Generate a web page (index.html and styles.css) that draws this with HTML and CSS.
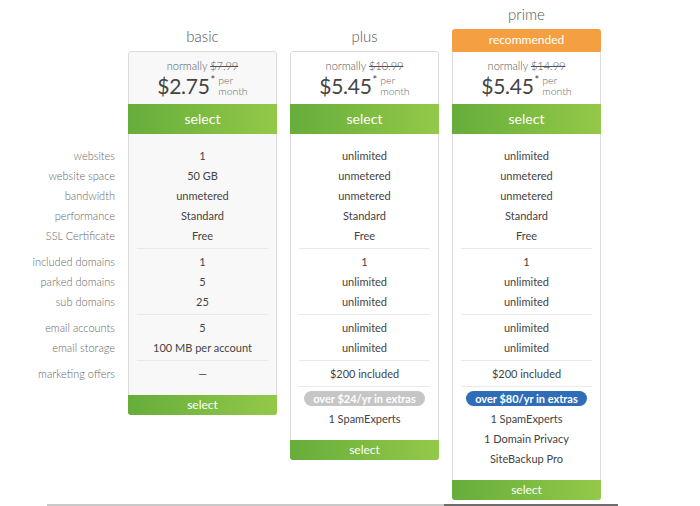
FILE: index.html
```html
<!DOCTYPE html>
<html>
<head>
<meta charset="utf-8">
<title>Plans</title>
<link rel="stylesheet" href="styles.css">
</head>
<body>
<div class="pricing">
  <div class="labels">
    <div class="row">websites</div>
    <div class="row">website space</div>
    <div class="row">bandwidth</div>
    <div class="row">performance</div>
    <div class="row">SSL Certificate</div>
    <div class="sep"></div>
    <div class="row">included domains</div>
    <div class="row">parked domains</div>
    <div class="row">sub domains</div>
    <div class="sep"></div>
    <div class="row">email accounts</div>
    <div class="row">email storage</div>
    <div class="sep"></div>
    <div class="row">marketing offers</div>
  </div>

  <div class="plan">
    <div class="plan-head"><div class="plan-name">basic</div></div>
    <div class="card card-basic">
      <div class="price-box">
        <div class="normally">normally <s>$7.99</s></div>
        <div class="price"><span class="amount">$2.75</span><span class="star">*</span><span class="per">per<br>month</span></div>
      </div>
      <a class="btn">select</a>
      <div class="features">
        <div class="row">1</div>
        <div class="row">50 GB</div>
        <div class="row">unmetered</div>
        <div class="row">Standard</div>
        <div class="row">Free</div>
        <div class="sep"></div>
        <div class="row">1</div>
        <div class="row">5</div>
        <div class="row">25</div>
        <div class="sep"></div>
        <div class="row">5</div>
        <div class="row">100 MB per account</div>
        <div class="sep"></div>
        <div class="row">&mdash;</div>
      </div>
      <a class="btn btn-small">select</a>
    </div>
  </div>

  <div class="plan">
    <div class="plan-head"><div class="plan-name">plus</div></div>
    <div class="card">
      <div class="price-box">
        <div class="normally">normally <s>$10.99</s></div>
        <div class="price"><span class="amount">$5.45</span><span class="star">*</span><span class="per">per<br>month</span></div>
      </div>
      <a class="btn">select</a>
      <div class="features">
        <div class="row">unlimited</div>
        <div class="row">unmetered</div>
        <div class="row">unmetered</div>
        <div class="row">Standard</div>
        <div class="row">Free</div>
        <div class="sep"></div>
        <div class="row">1</div>
        <div class="row">unlimited</div>
        <div class="row">unlimited</div>
        <div class="sep"></div>
        <div class="row">unlimited</div>
        <div class="row">unlimited</div>
        <div class="sep"></div>
        <div class="row">$200 included</div>
        <div class="sep"></div>
        <div class="badge badge-gray">over $24/yr in extras</div>
        <div class="row">1 SpamExperts</div>
      </div>
      <a class="btn btn-small">select</a>
    </div>
  </div>

  <div class="plan">
    <div class="plan-head">
      <div class="plan-name plan-name-top">prime</div>
      <div class="ribbon">recommended</div>
    </div>
    <div class="card card-featured">
      <div class="price-box">
        <div class="normally">normally <s>$14.99</s></div>
        <div class="price"><span class="amount">$5.45</span><span class="star">*</span><span class="per">per<br>month</span></div>
      </div>
      <a class="btn">select</a>
      <div class="features">
        <div class="row">unlimited</div>
        <div class="row">unmetered</div>
        <div class="row">unmetered</div>
        <div class="row">Standard</div>
        <div class="row">Free</div>
        <div class="sep"></div>
        <div class="row">1</div>
        <div class="row">unlimited</div>
        <div class="row">unlimited</div>
        <div class="sep"></div>
        <div class="row">unlimited</div>
        <div class="row">unlimited</div>
        <div class="sep"></div>
        <div class="row">$200 included</div>
        <div class="sep"></div>
        <div class="badge badge-blue">over $80/yr in extras</div>
        <div class="row">1 SpamExperts</div>
        <div class="row">1 Domain Privacy</div>
        <div class="row">SiteBackup Pro</div>
      </div>
      <a class="btn btn-small">select</a>
    </div>
  </div>
</div>
<div class="tabs"><div class="tab-a"></div><div class="tab-b"></div></div>
</body>
</html>
```

FILE: styles.css
```css
* { box-sizing: border-box; }

body {
  margin: 0;
  font-family: Lato, "Open Sans", "Liberation Sans", sans-serif;
  color: #444;
  background: #fff;
  overflow: hidden;
}

.pricing {
  display: flex;
  gap: 13px;
  align-items: flex-start;
}

.labels {
  width: 115px;
  padding-top: 146px;
  text-align: right;
  font-size: 11px;
  font-weight: 300;
  color: #666;
}

.row {
  height: 20px;
  line-height: 20px;
  white-space: nowrap;
}

.sep {
  height: 1px;
  margin: 2px 8px 3px;
  background: #e9e9e9;
}

.labels .sep { background: transparent; }

.plan { width: 149px; }

.plan-head {
  height: 51px;
  display: flex;
  flex-direction: column;
  justify-content: flex-end;
  align-items: center;
}

.plan-name {
  font-size: 15px;
  font-weight: 300;
  color: #555;
  line-height: 20px;
  margin-bottom: 5px;
}

.plan-name-top { margin-bottom: 5px; }

.ribbon {
  align-self: stretch;
  height: 22px;
  line-height: 22px;
  background: #f4a042;
  color: #fff;
  font-size: 12px;
  text-align: center;
  border-radius: 3px 3px 0 0;
}

.card {
  border: 1px solid #dcdcdc;
  border-radius: 3px;
  background: #fff;
  text-align: center;
  font-size: 11px;
  color: #444;
}

.card-basic { background: #f8f8f8; }

.card-featured {
  border-top-color: #f4a042;
  border-radius: 0 0 3px 3px;
}

.price-box {
  height: 52px;
  padding-top: 7px;
}

.normally {
  line-height: 14px;
  font-size: 11px;
  font-weight: 300;
  color: #555;
}

.normally s { color: #555; }

.price {
  display: flex;
  justify-content: center;
  align-items: center;
  height: 24px;
  margin-top: 1px;
}

.amount {
  font-size: 21px;
  line-height: 24px;
  color: #444;
  letter-spacing: -0.3px;
}

.star {
  align-self: flex-start;
  font-size: 11px;
  line-height: 12px;
  margin-left: 1px;
  color: #444;
}

.per {
  font-size: 10.5px;
  line-height: 11px;
  text-align: left;
  color: #666;
  margin-left: 3px;
  font-weight: 300;
}

.btn {
  display: block;
  margin: 0 -1px;
  height: 30px;
  line-height: 30px;
  background: linear-gradient(to right, #66ad3b, #93c948);
  color: #fff;
  font-size: 14px;
  text-align: center;
}

.btn-small {
  height: 20px;
  line-height: 20px;
  font-size: 12px;
  margin: 0 -1px -1px;
  border-radius: 0 0 3px 3px;
}

.features { padding: 12px 0 11px; }

.badge {
  width: 121px;
  height: 15px;
  line-height: 15px;
  margin: 4px auto 3px;
  border-radius: 8px;
  color: #fff;
  font-size: 11px;
  font-weight: 700;
  white-space: nowrap;
}

.badge-gray { background: #c6c6c6; }
.badge-blue { background: #2f6db6; }

.tabs {
  display: flex;
  margin: 4px 0 0 47px;
  width: 571px;
  height: 2px;
}

.tab-a { width: 397px; background: #c9c9c9; }
.tab-b { flex: 1; background: #6d6d6d; }
```
